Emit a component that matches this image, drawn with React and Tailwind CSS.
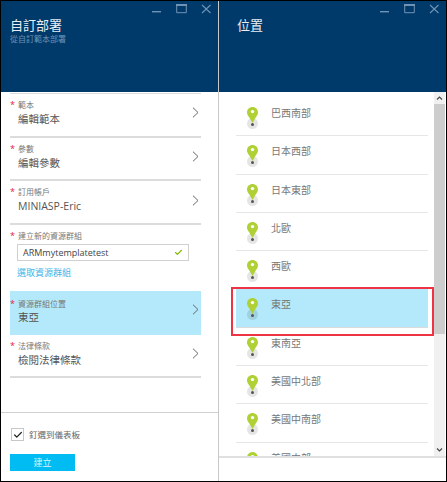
import React from "react";
import { Check } from "lucide-react";

const CJK = "font-['Open_Sans','Noto_Sans_CJK_TC',sans-serif]";

const locations = ["巴西南部", "日本西部", "日本東部", "北歐", "西歐", "東亞", "東南亞", "美國中北部", "美國中南部", "美國中部"];

function WindowButtons() {
  return (
    <div className="flex justify-end items-start gap-[14px] pr-[6px] pt-[3px] h-[15px] text-[#6f93b5]">
      <svg width="11" height="11" viewBox="0 0 11 11">
        <rect x="1" y="7" width="9" height="1.4" fill="currentColor" />
      </svg>
      <svg width="11" height="10" viewBox="0 0 11 10">
        <path d="M.7.7h9.6v8H.7z" fill="none" stroke="currentColor" />
        <rect x="0" y="0" width="11" height="2" fill="currentColor" />
      </svg>
      <svg width="11" height="10" viewBox="0 0 11 10">
        <path d="M1 1l8.5 8M9.5 1L1 9" stroke="currentColor" strokeWidth="1.1" fill="none" />
      </svg>
    </div>
  );
}

function Chevron() {
  return (
    <svg width="7" height="11" viewBox="0 0 7 11" className="shrink-0 text-[#666]">
      <path d="M1 .7l5 4.8-5 4.8" stroke="currentColor" fill="none" />
    </svg>
  );
}

function Field({ label, value, active }) {
  return (
    <div className={`flex items-center justify-between h-[43.7px] pb-[4px] border-b-2 pr-[2px] ${active ? "bg-[#b3e9fa] border-[#b3e9fa]" : "border-[#dcdcdc]"}`}>
      <div className={`flex ${active ? "pt-[3px]" : ""}`}>
        <span className="w-[8px] text-[9px] leading-[12px] text-[#e8203a]">*</span>
        <div>
          <div className="text-[8px] leading-[11px] text-[#777]">{label}</div>
          <div className={`text-[10.5px] leading-[16px] text-[#555] ${active ? "" : "mt-[1px]"}`}>{value}</div>
        </div>
      </div>
      <Chevron />
    </div>
  );
}

function Pin() {
  return (
    <div className="relative w-[11px] h-[22px]">
      <div className="absolute left-0 bottom-0 w-[11px] h-[11px] rounded-full bg-black/10">
        <div className="w-[3px] h-[3px] rounded-full bg-[#555] mx-auto mt-[5px]" />
      </div>
      <svg width="11" height="16" viewBox="0 0 11 16" className="absolute left-0 top-0">
        <path d="M5.5 0C2.4 0 0 2.4 0 5.3c0 2 1 3.5 2.3 5.3L5.5 16l3.2-5.4C10 8.8 11 7.3 11 5.3 11 2.4 8.6 0 5.5 0z" fill="#afd136" />
        <circle cx="5.5" cy="4.6" r="1.7" fill="#fff" />
      </svg>
    </div>
  );
}

export default function App() {
  return (
    <div className={`flex w-[447px] h-[482px] border border-black bg-white overflow-hidden ${CJK}`}>
      {/* 左邊 blade */}
      <div className="flex flex-col w-[218px] border-r border-[#c8c8c8]">
        <div className="h-[91px] shrink-0 bg-[#003a6b]">
          <WindowButtons />
          <div className="pl-[9px] pt-[1px] text-[13px] leading-[16px] text-[#e8eef4]">自訂部署</div>
          <div className="pl-[9px] pt-[1px] text-[8px] leading-[10px] text-[#6f93b5]">從自訂範本部署</div>
        </div>
        <div className="flex-1 pl-[9px] pr-[17px]">
          <div className="border-t border-[#dcdcdc] mt-[1px]" />
          <Field label="範本" value="編輯範本" />
          <Field label="參數" value="編輯參數" />
          <Field label="訂用帳戶" value="MINIASP-Eric" />
          <div className="h-[66px] pt-[5px]">
            <div className="flex">
              <span className="w-[8px] text-[9px] leading-[12px] text-[#e8203a]">*</span>
              <span className="text-[8px] leading-[12px] text-[#777]">建立新的資源群組</span>
            </div>
            <div className="flex items-center justify-between h-[17px] ml-[7px] mr-[12px] mt-[2px] px-[5px] border border-[#d0d0d0] text-[9px] text-[#444]">
              ARMmytemplatetest
              <Check size={9} strokeWidth={3} className="text-[#7fba00]" />
            </div>
            <div className="ml-[7px] mt-[6px] text-[9px] leading-[12px] text-[#3cb4e6]">選取資源群組</div>
          </div>
          <Field label="資源群組位置" value="東亞" active />
          <Field label="法律條款" value="檢閱法律條款" />
        </div>
        <div className="h-[69px] shrink-0 border-t border-[#d0d0d0] pl-[9px] pt-[15px]">
          <div className="flex items-center gap-[5px] ml-[1px]">
            <div className="flex items-center justify-center w-[13px] h-[13px] border border-[#c8c8c8]">
              <Check size={10} strokeWidth={3} className="text-[#222]" />
            </div>
            <span className="text-[8.5px] leading-[13px] text-[#666]">釘選到儀表板</span>
          </div>
          <button className="block w-[65px] h-[17px] mt-[13px] bg-[#00bcf2] text-[9px] leading-[17px] text-[#d8f4fc]">建立</button>
        </div>
      </div>

      {/* 右邊 blade */}
      <div className="relative flex flex-col flex-1">
        <div className="h-[91px] shrink-0 bg-[#003a6b]">
          <WindowButtons />
          <div className="pl-[18px] pt-[1px] text-[13px] leading-[16px] text-[#e8eef4]">位置</div>
        </div>
        <div className="flex flex-1 min-h-0">
          <div className="flex-1 pl-[17px] pr-[6px] pt-[6px] overflow-hidden">
            {locations.map((name) => (
              <div
                key={name}
                className={`flex h-[38.3px] shrink-0 border-b ${name === "東亞" ? "bg-[#b3e9fa] border-[#dcdcdc]" : "border-[#e6e6e6]"}`}
              >
                <div className="pl-[11px] pt-[9px]">
                  <Pin />
                </div>
                <span className="pl-[13px] pt-[8px] text-[10px] leading-[14px] text-[#777]">{name}</span>
              </div>
            ))}
          </div>
          <div className="flex flex-col items-center w-[11px] mr-[1px] bg-[#f0f0f0]">
            <svg width="7" height="12" viewBox="0 0 7 12" className="shrink-0 text-[#444]">
              <path d="M1 7.5l2.5-2.5L6 7.5" stroke="currentColor" strokeWidth="1.1" fill="none" />
            </svg>
            <div className="w-full h-[230px] shrink-0 bg-[#cdcdcd]" />
            <svg width="7" height="12" viewBox="0 0 7 12" className="mt-auto shrink-0 text-[#444]">
              <path d="M1 4.5L3.5 7 6 4.5" stroke="currentColor" strokeWidth="1.1" fill="none" />
            </svg>
          </div>
        </div>
        <div className="h-[25px] shrink-0 border-t-2 border-[#e0e0e0]" />
        {/* 紅框標示 */}
        <div className="absolute left-[12px] top-[286px] w-[203px] h-[49px] border-2 border-[#ee3344]" />
      </div>
    </div>
  );
}
